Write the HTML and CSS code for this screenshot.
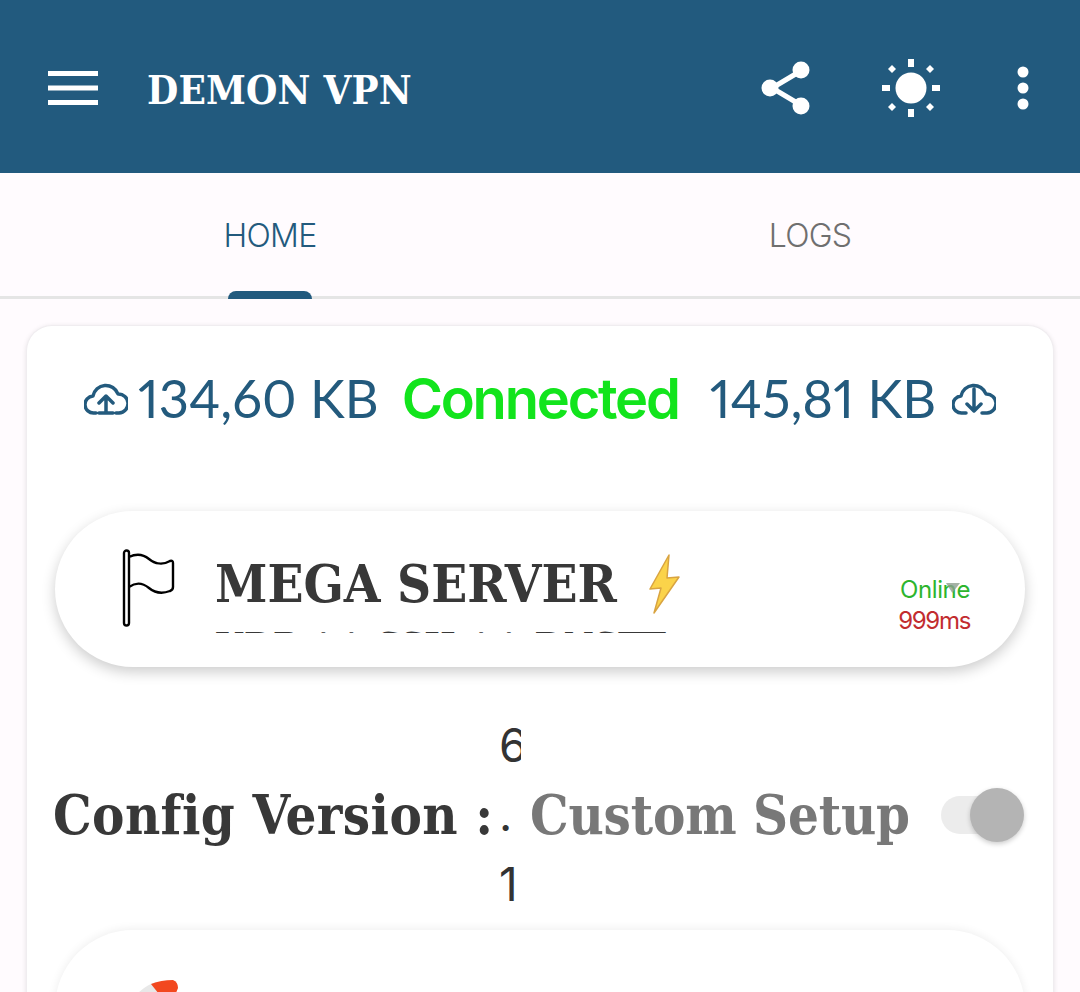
FILE: index.html
```html
<!DOCTYPE html>
<html lang="en">
<head>
<meta charset="utf-8">
<title>DEMON VPN</title>
<link rel="stylesheet" href="styles.css">
</head>
<body>
<div class="app">
  <header class="appbar">
    <svg class="menu-icon" viewBox="0 0 50 34" width="50" height="34"><path d="M0 2.500h50M0 17h50M0 31.500h50" stroke="#fff" stroke-width="5" fill="none"/></svg>
    <h1 class="app-title">DEMON VPN</h1>
    <svg class="share-icon" viewBox="0 0 50 54" width="50" height="54"><path d="M38 11 11 27l27 16" stroke="#fff" stroke-width="5" fill="none"/><circle cx="40" cy="9" r="8.500" fill="#fff"/><circle cx="9" cy="27" r="8.500" fill="#fff"/><circle cx="40" cy="45" r="8.500" fill="#fff"/></svg>
    <svg class="sun-icon" viewBox="0 0 60 60" width="60" height="60"><circle cx="30" cy="30" r="15.500" fill="#fff"/><path d="M27 1h6v8h-6zM27 51h6v8h-6zM1 27h8v6H1zM51 27h8v6h-8z" fill="#fff"/><path d="m11 7 4 4-4 4-4-4zM49 7l4 4-4 4-4-4zM11 45l4 4-4 4-4-4zM49 45l4 4-4 4-4-4z" fill="#fff"/></svg>
    <svg class="more-icon" viewBox="0 0 12 44" width="12" height="44"><circle cx="6" cy="6" r="5.500" fill="#fff"/><circle cx="6" cy="22" r="5.500" fill="#fff"/><circle cx="6" cy="38" r="5.500" fill="#fff"/></svg>
  </header>
  <nav class="tabs">
    <div class="tab tab-active">HOME<span class="tab-indicator"></span></div>
    <div class="tab">LOGS</div>
  </nav>
  <main class="card">
    <div class="stats">
      <svg class="cloud" viewBox="0 0 44 32" width="44" height="32"><path d="M12 30H10a8.500 8.500 0 0 1-1-17 13 13 0 0 1 25-2 9.500 9.500 0 0 1 1 19h-3M22 30V14M15 20l7-7 7 7M15 30h14" stroke="#235a7d" stroke-width="3.500" fill="none" stroke-linecap="round" stroke-linejoin="round"/></svg>
      <span class="stat stat-up">134,60 KB</span>
      <span class="status">Connected</span>
      <span class="stat stat-down">145,81 KB</span>
      <svg class="cloud" viewBox="0 0 44 32" width="44" height="32"><path d="M14 30H10a8.500 8.500 0 0 1-1-17 13 13 0 0 1 25-2 9.500 9.500 0 0 1 1 19h-5M22 6v22M15 21l7 7 7-7" stroke="#235a7d" stroke-width="3.500" fill="none" stroke-linecap="round" stroke-linejoin="round"/></svg>
    </div>
    <section class="pill server">
      <svg class="flag" viewBox="0 0 54 80" width="54" height="80"><path d="M2 4a2 2 0 0 1 5 0v70a2 2 0 0 1-5 0zM7 8c8-4 14-3 20 2s14 6 21 2q3-1 3 2v24q0 3-3 4c-8 3-15 2-21-3s-13-6-20-1" stroke="#000" stroke-width="2.400" fill="#fff" stroke-linejoin="round"/></svg>
      <div class="server-text">
        <div class="server-name">MEGA SERVER <span class="bolt"><svg viewBox="0 0 34 60" width="34" height="60"><path d="M22 1 3 35l11-1L7 59l25-36-12 1z" fill="#fbd34a" stroke="#d9a441" stroke-width="1.500" stroke-linejoin="round"/></svg></span></div>
        <div class="server-sub">UDP ↓↓ SSH ↓↓ DNSTT</div>
      </div>
      <div class="ping">
        <span class="online">Online<svg class="ping-arrow" viewBox="0 0 20 14" width="20" height="14"><path d="M0 0h20L9 14z" fill="#8f9f8f" fill-opacity=".8"/></svg></span>
        <span class="latency">999ms</span>
      </div>
    </section>
    <div class="config">
      <span class="config-label">Config Version :</span>
      <span class="config-version">6<wbr>.<wbr>1</span>
      <span class="config-setup">Custom Setup</span>
      <span class="switch"><span class="knob"></span></span>
    </div>
    <section class="pill second">
      <svg class="gauge" viewBox="0 0 60 30" width="60" height="30"><path d="M2 30C8 14 18 6 30 2l10 26z" fill="#e8e8e8"/><path d="M25 4q10-4 22-4 5 2 5 8l-8 20z" fill="#f2481f"/></svg>
    </section>
  </main>
</div>
</body>
</html>
```
FILE: styles.css
```css
* { box-sizing: border-box; }
html, body { margin: 0; height: 992px; overflow: hidden; }
body { background: #fffbfe; font-family: "Lato", "Noto Sans", sans-serif; }
.app { width: 1080px; height: 992px; overflow: hidden; display: flex; flex-direction: column; }
.appbar { height: 173px; background: #225a7e; display: flex; align-items: center; padding: 0 51px 0 48px; flex: none; }
.menu-icon { flex: none; margin-top: 3px; }
.app-title { margin: 7px auto 0 49px; color: #fff; font: 700 40px/1 "DejaVu Serif", serif; font-stretch: condensed; letter-spacing: .2px; white-space: nowrap; }
.share-icon { margin-right: 70px; margin-top: 3px; margin-left: -1px; }
.sun-icon { margin-right: 76px; margin-top: 2px; }
.more-icon { margin-top: 3px; }
.tabs { height: 126px; display: grid; grid-template-columns: 1fr 1fr; border-bottom: 3px solid #e5e5e5; flex: none; }
.tab { position: relative; display: flex; align-items: center; justify-content: center; font: 300 32px/1 "Inter", sans-serif; color: #6f6f6f; padding-top: 2px; letter-spacing: -.7px; }
.tab-active { color: #235a7d; }
.tab-indicator { position: absolute; left: 228px; bottom: -3px; width: 84px; height: 8px; background: #225a7e; border-radius: 8px 8px 0 0; }
.card { margin: 26px 26px 0; padding: 0 28px; flex: 1; background: #fff; border: 1px solid #f0edf0; border-bottom: 0; border-radius: 26px 26px 0 0; box-shadow: 0 1px 5px rgba(0,0,0,.1); }
.stats { height: 145px; display: flex; align-items: center; justify-content: center; margin-bottom: 40px; }
.stat { font-size: 52.500px; color: #235a7d; line-height: 1; font-variant-numeric: proportional-nums; }
.stat-up { margin: 0 23px 0 10px; }
.stat-down { margin: 0 16px 0 31px; }
.status { font: 600 56px/1 "Inter", sans-serif; color: #12e41c; letter-spacing: -2.200px; }
.pill { width: 970px; background: #fff; border-radius: 78px; box-shadow: 0 5px 14px rgba(0,0,0,.2); }
.server { height: 156px; display: flex; align-items: center; padding: 0 54px 0 67px; }
.flag { flex: none; }
.server-text { margin-left: 39px; height: 88px; overflow: hidden; flex: 1; }
.server-name { font: 700 52.600px/88px "DejaVu Serif", serif; font-stretch: condensed; color: #383838; white-space: nowrap; display: flex; align-items: center; gap: 30px; height: 77px; }
.bolt { display: flex; }
.server-sub { margin-top: 6px; font: 700 37px/1 "DejaVu Serif", serif; font-stretch: condensed; color: #383838; white-space: nowrap; }
.ping { display: flex; flex-direction: column; align-items: flex-end; font: 400 24px/31px "Inter", sans-serif; margin-top: 31px; margin-right: 1px; }
.online { color: #2db52e; position: relative; letter-spacing: -.4px; }
.ping-arrow { position: absolute; right: 10px; top: 9px; width: 14px; height: 10px; }
.latency { color: #c22c2f; letter-spacing: -1.300px; }
.config { height: 210px; margin: 43px 0 10px -2px; display: flex; align-items: center; white-space: nowrap; width: 972px; }
.config-label { font: 700 54px/1 "DejaVu Serif", serif; font-stretch: condensed; color: #383838; letter-spacing: .4px; width: 446px; flex: none; }
.config-version { width: 22px; flex: none; margin-right: 9px; white-space: normal; overflow: hidden; font: 400 46px/69.500px "Inter", sans-serif; color: #333; text-align: left; }
.config-setup { font: 700 54px/1 "DejaVu Serif", serif; font-stretch: condensed; color: #787878; letter-spacing: -.2px; width: 411px; flex: none; }
.switch { position: relative; width: 68px; height: 38px; background: #ececec; border-radius: 19px; flex: none; }
.knob { position: absolute; right: -15px; top: -8px; width: 54px; height: 54px; border-radius: 50%; background: #b4b4b4; box-shadow: 0 2px 5px rgba(0,0,0,.2); }
.second { height: 200px; padding: 50px 0 0 71px; box-shadow: 0 -1px 10px rgba(0,0,0,.07); }
.gauge { display: block; }
```
